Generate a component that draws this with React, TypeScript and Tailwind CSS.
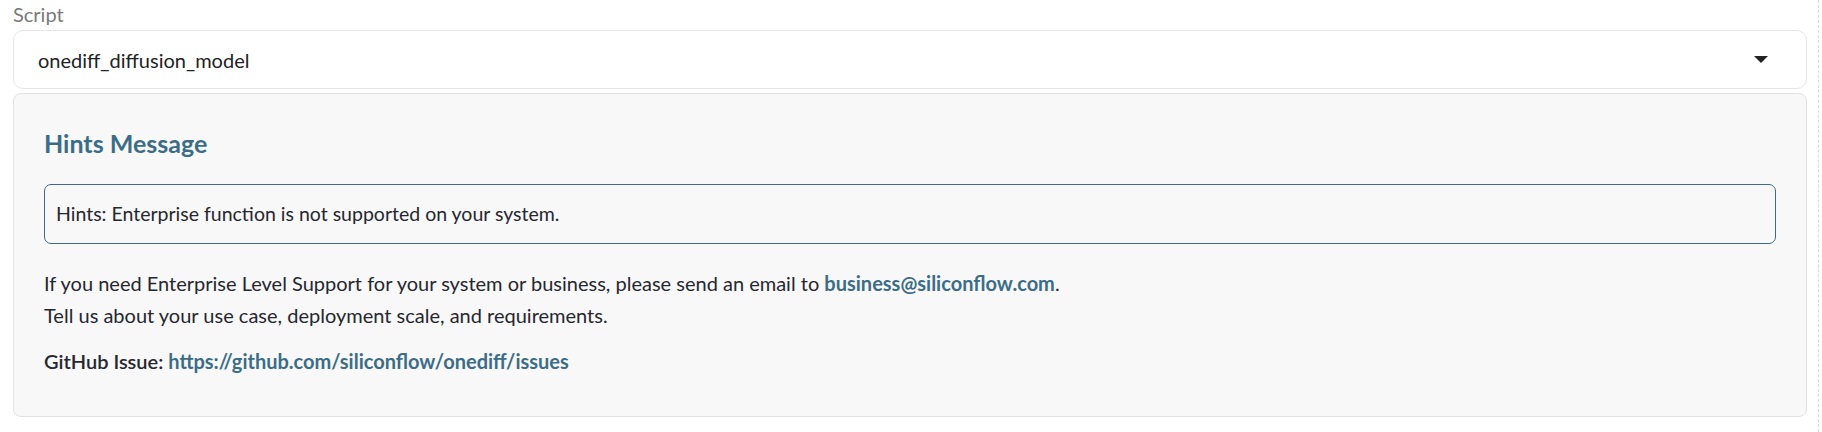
import React from 'react';

const font = { fontFamily: 'Lato, "Open Sans", sans-serif' };

export default function App() {
    return (
        <div className="w-[1822px] h-[432px] bg-white text-[#31333f] overflow-hidden" style={font}>
            <div className="w-[1819px] h-full border-r border-dashed border-[#d9d9d9] pl-[13px] pr-[11px]">
                {/* Label */}
                <div className="h-[30px] pt-[1px] text-[20px] leading-[26px] text-[#7a7a7a]">Script</div>

                {/* Select */}
                <div className="h-[59px] rounded-[10px] border border-[#e6e6e6] bg-white flex items-center justify-between pl-[24px] pr-[38px]">
                    <span className="text-[20px] text-[#222]">onediff_diffusion_model</span>
                    <svg width="14" height="7" viewBox="0 0 14 7">
                        <path d="M0 0 L14 0 L7 7 Z" fill="#222" />
                    </svg>
                </div>

                {/* Hints panel */}
                <div className="mt-[4px] h-[324px] rounded-lg border border-[#e2e2e2] bg-[#f8f8f8] pl-[30px] pr-[30px] pt-[33px]">
                    <h3 className="text-[25px] leading-[32px] font-bold text-[#3b6d88]">Hints Message</h3>

                    <div className="mt-[25px] h-[60px] rounded-[7px] border border-[#3f6b80] flex items-center px-[11px] text-[19.5px] text-[#262730]">
                        Hints: Enterprise function is not supported on your system.
                    </div>

                    <div className="mt-[23px] text-[20px] leading-[32px] text-[#262730]">
                        <p>
                            If you need Enterprise Level Support for your system or business, please send an email to{' '}
                            <a className="font-bold text-[#3b6d88]">business@siliconflow.com</a>.
                        </p>
                        <p>Tell us about your use case, deployment scale, and requirements.</p>
                        <p className="mt-[14px]">
                            <span className="font-semibold">GitHub Issue: </span>
                            <a className="font-bold text-[#3b6d88]">https://github.com/siliconflow/onediff/issues</a>
                        </p>
                    </div>
                </div>
            </div>
        </div>
    );
}
